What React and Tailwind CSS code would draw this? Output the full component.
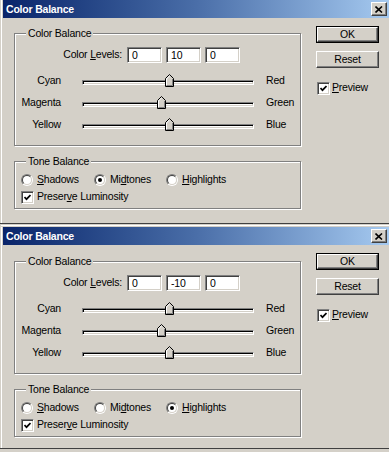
import React from "react";

function CloseButton() {
  return (
    <div className="w-[16px] h-[14px] bg-[#d4d0c8] border border-t-white border-l-white border-r-[#404040] border-b-[#404040] shadow-[inset_-1px_-1px_0_#808080] flex items-center justify-center">
      <svg width="8" height="7" viewBox="0 0 8 7">
        <path d="M0.5 0.5 L7 6.5 M7 0.5 L0.5 6.5" stroke="#000" strokeWidth="1.6" />
      </svg>
    </div>
  );
}

function GroupBox({ label, className, children }) {
  return (
    <div className={"relative border border-[#808080] shadow-[inset_1px_1px_0_#fff,1px_1px_0_#fff] " + className}>
      <span className="absolute left-[11px] -top-[8px] bg-[#d4d0c8] px-[2px] leading-[14px]">{label}</span>
      {children}
    </div>
  );
}

function Field({ value }) {
  return (
    <div className="w-[35px] h-[16px] border border-t-[#808080] border-l-[#808080] border-b-white border-r-white shadow-[inset_1px_1px_0_#404040,inset_-1px_-1px_0_#d4d0c8] bg-white flex items-center pl-[4px] leading-none">
      {value}
    </div>
  );
}

function Slider({ left, right, pos }) {
  return (
    <div className="flex items-center h-[22px]">
      <span className="w-[46px] text-right">{left}</span>
      <div className="relative ml-[21px] w-[172px] h-[22px] pt-[10px]">
        <div className="h-[5px] border border-t-[#808080] border-l-[#808080] border-b-white border-r-white shadow-[inset_1px_1px_0_#000,inset_-1px_-1px_0_#d4d0c8] bg-white" />
        <svg className="absolute top-[4px]" style={{ left: pos - 4.5 }} width="9" height="13" viewBox="0 0 9 13">
          <polygon points="4.5,0.5 8.5,4.5 8.5,12.5 0.5,12.5 0.5,4.5" fill="#d4d0c8" stroke="#000" strokeWidth="1" />
          <polyline points="1.5,11.5 1.5,5 4.5,1.8" fill="none" stroke="#fff" strokeWidth="1" />
          <polyline points="7.5,5 7.5,11.5 1.5,11.5" fill="none" stroke="#808080" strokeWidth="1" />
        </svg>
      </div>
      <span className="ml-[12px]">{right}</span>
    </div>
  );
}

function Radio({ checked }) {
  return (
    <div className="w-[12px] h-[12px] rounded-full border border-t-[#808080] border-l-[#808080] border-b-white border-r-white">
      <div className="w-full h-full rounded-full border border-t-[#404040] border-l-[#404040] border-b-[#d4d0c8] border-r-[#d4d0c8] bg-white flex items-center justify-center">
        {checked && <div className="w-[4px] h-[4px] rounded-full bg-black" />}
      </div>
    </div>
  );
}

function Checkbox() {
  return (
    <div className="w-[13px] h-[13px] border border-t-[#808080] border-l-[#808080] border-b-white border-r-white shadow-[inset_1px_1px_0_#404040,inset_-1px_-1px_0_#d4d0c8] bg-white flex items-center justify-center">
      <svg width="7" height="7" viewBox="0 0 7 7">
        <polyline points="0.5,3 2.5,5.2 6.5,1" fill="none" stroke="#000" strokeWidth="1.7" />
      </svg>
    </div>
  );
}

function Button({ children, isDefault }) {
  const inner = (
    <div className="h-full w-full bg-[#d4d0c8] border border-t-white border-l-white border-r-[#404040] border-b-[#404040] shadow-[inset_-1px_-1px_0_#808080] flex items-center justify-center leading-none">
      {children}
    </div>
  );
  if (isDefault) return <div className="w-[63px] h-[17px] border border-black">{inner}</div>;
  return <div className="w-[63px] h-[17px]">{inner}</div>;
}

function Dialog({ values, thumbs, tone, topFrame }) {
  const tones = [
    { key: "shadows", label: <><u>S</u>hadows</>, w: "w-[73px]" },
    { key: "midtones", label: <>Mi<u>d</u>tones</>, w: "w-[72px]" },
    { key: "highlights", label: <><u>H</u>ighlights</>, w: "" },
  ];
  return (
    <div className="border-b border-[#404040] flex flex-col">
      {topFrame && <div className="h-[3px] border-y border-[#d4d0c8] bg-white ml-px" />}
      <div className="flex">
        <div className="w-[3px] border-x border-[#d4d0c8] bg-white" />
        <div className="flex-1 flex flex-col">
          <div className="h-[18px] flex items-center justify-between bg-linear-to-r from-[#0a246a] via-[#4a6ea8] to-[#a6caf0] pl-[3px] pr-[2px]">
            <span className="text-white font-bold text-[10.5px] tracking-[-0.2px] leading-none">Color Balance</span>
            <CloseButton />
          </div>
          <div className={"flex " + (topFrame ? "h-[203px]" : "h-[205px]")}>
            <div className={"ml-[11px] flex flex-col " + (topFrame ? "mt-[16px]" : "mt-[15px]")}>
              <GroupBox label="Color Balance" className="w-[287px] h-[113px] pt-[13px]">
                <div className="flex items-center">
                  <span className="w-[107px] text-right">Color <u>L</u>evels:</span>
                  <div className="ml-[5px] flex gap-[4px]">
                    {values.map((v, i) => <Field key={i} value={v} />)}
                  </div>
                </div>
                <div className="mt-[7px] flex flex-col">
                  <Slider left="Cyan" right="Red" pos={thumbs[0]} />
                  <Slider left="Magenta" right="Green" pos={thumbs[1]} />
                  <Slider left="Yellow" right="Blue" pos={thumbs[2]} />
                </div>
              </GroupBox>
              <GroupBox label="Tone Balance" className="mt-[15px] w-[287px] h-[48px] pt-[10px] pl-[6px]">
                <div className="flex items-center h-[16px]">
                  {tones.map((t) => (
                    <div key={t.key} className={"flex items-center " + t.w}>
                      <Radio checked={tone === t.key} />
                      <span className="ml-[4px]">{t.label}</span>
                    </div>
                  ))}
                </div>
                <div className="flex items-center h-[16px] mt-[1px]">
                  <Checkbox />
                  <span className="ml-[3px]">Preser<u>v</u>e Luminosity</span>
                </div>
              </GroupBox>
            </div>
            <div className="ml-[15px] mt-[8px] flex flex-col">
              <Button isDefault>OK</Button>
              <div className="mt-[8px]">
                <Button>Reset</Button>
              </div>
              <div className="mt-[12px] ml-[1px] flex items-center h-[16px]">
                <Checkbox />
                <span className="ml-[2px]"><u>P</u>review</span>
              </div>
            </div>
          </div>
        </div>
      </div>
    </div>
  );
}

export default function App() {
  return (
    <div className="w-[389px] h-[452px] overflow-hidden bg-[#d4d0c8] text-[10.5px] tracking-[-0.2px] text-black font-['Liberation_Sans',Arial,sans-serif]">
      <Dialog values={["0", "10", "0"]} thumbs={[87, 79, 87]} tone="midtones" />
      <Dialog values={["0", "-10", "0"]} thumbs={[87, 79.5, 87]} tone="highlights" topFrame />
    </div>
  );
}
